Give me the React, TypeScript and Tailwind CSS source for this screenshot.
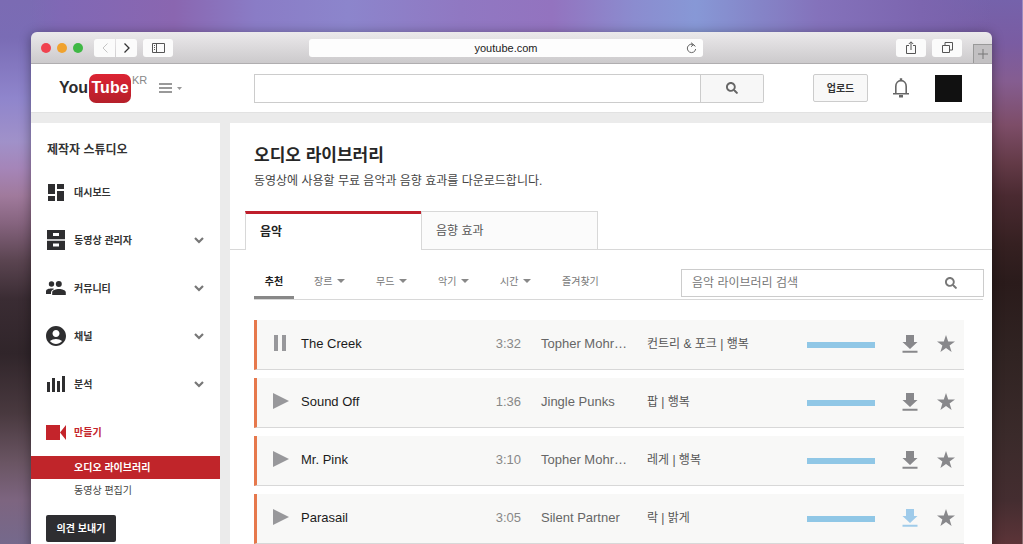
import React from "react";
import { FaSearch } from "react-icons/fa";
import { MdAccountCircle } from "react-icons/md";

const DashboardIcon = () => (
  <svg viewBox="0 0 16 17" className="h-[17px] w-4" fill="currentColor">
    <path d="M0 0h7v10H0zM9 0h7v5H9zM0 12h7v5H0zM9 7h7v10H9z" />
  </svg>
);

const DrawerIcon = () => (
  <svg viewBox="0 0 18 20" className="h-5 w-[18px]" fill="currentColor">
    <path
      fillRule="evenodd"
      d="M0 0h18v9.300H0zM6 3h6v3H6zM0 10.700h18V20H0zM6 13.500h6v3H6z"
    />
  </svg>
);

const PeopleIcon = () => (
  <svg viewBox="0 0 20 14" className="h-[14px] w-5" fill="currentColor">
    <circle cx="5.500" cy="3" r="2.700" />
    <circle cx="12.800" cy="3" r="3" />
    <path d="M0 13v-2.500C0 8.300 3 7.500 6 7.600c.8 0 1.500.1 2.100.3C6.300 8.700 5 9.800 5 11.500V13zM6.200 14v-2.500c0-2.200 3.800-3.400 6.800-3.400s6.800 1.200 6.800 3.400V14z" />
  </svg>
);

const BarsIcon = () => (
  <svg viewBox="0 0 18 16" className="h-4 w-[18px]" fill="currentColor">
    <path d="M0 6h3v10H0zM5 2h3v14H5zM10 5h3v11h-3zM15 0h3v16h-3z" />
  </svg>
);

const CameraIcon = () => (
  <svg viewBox="0 0 20 15" className="h-[15px] w-5" fill="currentColor">
    <path d="M0 0h14v15H0zM20 0v15l-6-7.500z" />
  </svg>
);

const BellIcon = () => (
  <svg viewBox="0 0 18 20" className="h-5 w-[18px]" fill="none" stroke="#666" strokeWidth="1.600">
    <path d="M1 15.800h16M3.800 15.500V8.500C3.800 5 6 2.600 9 2.600s5.200 2.400 5.200 5.900v7" />
    <path d="M9 .300v2M7 18.300h4" strokeWidth="2.400" />
  </svg>
);

const ChevronIcon = () => (
  <svg viewBox="0 0 10 7" className="h-[7px] w-[10px]" fill="none">
    <path d="M1 1l4 4 4-4" stroke="#777" strokeWidth="2.200" />
  </svg>
);

const DownloadIcon = () => (
  <svg viewBox="0 0 16 18" className="h-[18px] w-4" fill="currentColor">
    <path d="M4 0h8v7h3.500L8 14 .500 7H4zM.500 15.800h15v2H.500z" />
  </svg>
);

const StarIcon = () => (
  <svg viewBox="0 0 18 17" className="h-[17px] w-[18px]" fill="currentColor">
    <path d="M9 0l2.200 6.400H18l-5.400 4.100 2 6.500L9 13.100 3.400 17l2-6.500L0 6.400h6.800z" />
  </svg>
);

const Caret = () => (
  <svg viewBox="0 0 8 4" className="h-1 w-2" fill="#888">
    <path d="M0 0h8L4 4z" />
  </svg>
);

const menu_items = [
  { label: "대시보드", icon: <DashboardIcon />, hasArrow: false },
  { label: "동영상 관리자", icon: <DrawerIcon />, hasArrow: true },
  { label: "커뮤니티", icon: <PeopleIcon />, hasArrow: true },
  { label: "채널", icon: <MdAccountCircle size={24} />, hasArrow: true },
  { label: "분석", icon: <BarsIcon />, hasArrow: true },
];

const filters = ["장르", "무드", "악기", "시간"];

const tracks = [
  { title: "The Creek", time: "3:32", artist: "Topher Mohr…", genre: "컨트리 & 포크 | 행복", playing: true, saved: false },
  { title: "Sound Off", time: "1:36", artist: "Jingle Punks", genre: "팝 | 행복", playing: false, saved: false },
  { title: "Mr. Pink", time: "3:10", artist: "Topher Mohr…", genre: "레게 | 행복", playing: false, saved: false },
  { title: "Parasail", time: "3:05", artist: "Silent Partner", genre: "락 | 밝게", playing: false, saved: true },
];

const BrowserBar = () => (
  <div className="flex h-8 items-center rounded-t-md border-b border-[#b0aeb0] bg-linear-to-b from-[#ebe9eb] to-[#cccacc]">
    <div className="flex w-[278px] shrink-0 items-center pl-[10px]">
      <div className="flex gap-[6px]">
        <span className="size-[10px] rounded-full bg-[#f0424f]" />
        <span className="size-[10px] rounded-full bg-[#f0a22e]" />
        <span className="size-[10px] rounded-full bg-[#3fb845]" />
      </div>
      <div className="ml-[11px] flex gap-px">
        <button aria-label="뒤로" className="flex h-[18px] w-[21px] items-center justify-center rounded-l-[3px] bg-[#fbfbfb]">
          <svg viewBox="0 0 6 10" className="h-[10px] w-[6px]" fill="none" stroke="#c4c4c4">
            <path d="M5.500.500L1 5l4.500 4.500" />
          </svg>
        </button>
        <button aria-label="앞으로" className="flex h-[18px] w-[21px] items-center justify-center rounded-r-[3px] bg-[#fbfbfb]">
          <svg viewBox="0 0 6 10" className="h-[10px] w-[6px]" fill="none" stroke="#333" strokeWidth="1.300">
            <path d="M.500.500L5 5 .500 9.500" />
          </svg>
        </button>
      </div>
      <button aria-label="사이드바" className="ml-[6px] flex h-[18px] w-[30px] items-center justify-center rounded-[3px] bg-[#fbfbfb]">
        <svg viewBox="0 0 13 10" className="h-[10px] w-[13px]" fill="none" stroke="#555">
          <path d="M.500.500h12v9H.500zM4.500.500v9M2 2.500h1M2 4.500h1M2 6.500h1" />
        </svg>
      </button>
    </div>
    <div className="flex h-[18px] flex-1 items-center rounded-[3px] bg-[#fdfdfd] pr-[6px] pl-[17px] text-[11px] text-[#222]">
      <span className="flex-1 pt-px text-center">youtube.com</span>
      <button aria-label="새로고침">
        <svg viewBox="0 0 11 12" className="h-3 w-[11px]" fill="none" stroke="#666">
          <path d="M9.300 4.500A4.200 4.200 0 1 0 9.700 7M5 .700l2.500 2L5 4.700" />
        </svg>
      </button>
    </div>
    <div className="flex w-[289px] shrink-0 justify-end self-stretch">
      <div className="flex items-center gap-[6px] pr-[11px]">
        <button aria-label="공유" className="flex h-[18px] w-[30px] items-center justify-center rounded-[3px] bg-[#fbfbfb]">
          <svg viewBox="0 0 10 13" className="h-[13px] w-[10px]" fill="none" stroke="#555">
            <path d="M3 4.500H.500v8h9v-8H7M5 9V1M2.800 3L5 .800 7.200 3" />
          </svg>
        </button>
        <button aria-label="모든 탭" className="flex h-[18px] w-[30px] items-center justify-center rounded-[3px] bg-[#fbfbfb]">
          <svg viewBox="0 0 11 11" className="size-[11px]" fill="none" stroke="#555">
            <path d="M.500 3.500h7v7h-7zM3 3V.500h7.500V8H8" />
          </svg>
        </button>
      </div>
      <button aria-label="새 탭" className="mt-3 flex w-[19px] items-center justify-center border-t border-l border-[#999] bg-[#c2c0c2]">
        <svg viewBox="0 0 10 10" className="size-[10px]" stroke="#777">
          <path d="M5 0v10M0 5h10" />
        </svg>
      </button>
    </div>
  </div>
);

const SiteHeader = () => (
  <header className="flex h-[49px] items-center border-b border-[#e2e2e2] bg-white">
    <div className="flex w-[223px] shrink-0 items-center pl-7">
      <a href="#" className="flex items-center gap-px text-[16px] font-bold text-[#2b2b2e]">
        <span>You</span>
        <span className="flex h-[29px] w-[42px] items-center justify-center rounded-[7px] bg-linear-to-b from-[#dc2433] to-[#b51f2a] text-white">
          Tube
        </span>
      </a>
      <span className="ml-px self-start text-[11px] leading-3 text-[#888]">KR</span>
      <button aria-label="메뉴" className="ml-3 flex items-center gap-[5px]">
        <svg viewBox="0 0 13 10" className="h-[10px] w-[13px]" stroke="#999" strokeWidth="2">
          <path d="M0 1h13M0 5h13M0 9h13" />
        </svg>
        <svg viewBox="0 0 5 3" className="h-[3px] w-[5px]" fill="#999">
          <path d="M0 0h5L2.500 3z" />
        </svg>
      </button>
    </div>
    <form className="flex h-[29px] flex-1">
      <input aria-label="검색" className="min-w-0 flex-1 border border-[#ccc] px-2 text-[13px] outline-none" />
      <button
        type="button"
        aria-label="검색하기"
        className="flex w-[63px] items-center justify-center rounded-r-[2px] border border-l-0 border-[#ccc] bg-[#f7f7f7]"
      >
        <FaSearch size={12} color="#666" />
      </button>
    </form>
    <div className="flex w-[228px] shrink-0 items-center justify-end pr-[30px]">
      <button className="h-7 w-[55px] rounded-[2px] border border-[#ccc] bg-[#f8f8f8] text-[10px] font-bold text-[#333]">
        업로드
      </button>
      <button aria-label="알림" className="ml-6">
        <BellIcon />
      </button>
      <button aria-label="계정" className="ml-[25px] size-[27px] bg-[#111]" />
    </div>
  </header>
);

const Sidebar = () => (
  <aside className="w-[189px] shrink-0 bg-white text-[10px] text-[#333]">
    <h2 className="flex h-[45px] items-center pt-2 pl-4 text-[12px] font-bold">
      제작자 스튜디오
    </h2>
    <nav>
      {menu_items.map((item) => (
        <a key={item.label} href="#" className="flex h-12 items-center pr-4 pl-[13px] font-bold">
          <span className="flex w-6 justify-center text-[#2e2e30]">{item.icon}</span>
          <span className="ml-[6px] flex-1">{item.label}</span>
          {item.hasArrow && <ChevronIcon />}
        </a>
      ))}
      <a href="#" className="flex h-12 items-center pl-[15px] font-bold text-[#c4242b]">
        <CameraIcon />
        <span className="ml-2">만들기</span>
      </a>
      <a href="#" className="flex h-[23px] items-center bg-[#c0252a] pl-[43px] font-bold text-white">
        오디오 라이브러리
      </a>
      <a href="#" className="flex h-[22px] items-center pl-[43px] text-[#444]">
        동영상 편집기
      </a>
    </nav>
    <button className="mt-[14px] ml-[15px] h-[27px] w-[70px] rounded-[2px] bg-[#2e2e31] font-bold text-white">
      의견 보내기
    </button>
  </aside>
);

const TrackTable = () => (
  <table className="w-full table-fixed border-separate border-spacing-x-0 border-spacing-y-2 text-left text-[13px]">
    <colgroup>
      <col className="w-[47px]" />
      <col />
      <col className="w-[60px]" />
      <col className="w-[126px]" />
      <col className="w-[160px]" />
      <col className="w-[84px]" />
      <col className="w-[37px]" />
      <col className="w-[36px]" />
    </colgroup>
    <tbody>
      {tracks.map((track) => (
        <tr key={track.title} className="h-[50px] *:border-b *:border-b-[#d8d8d8] *:bg-[#f8f8f7] *:pb-[2px]">
          <td className="border-l-3 border-l-[#e6784c] pl-4">
            <button aria-label={track.playing ? "일시정지" : "재생"} className="mb-[2px] block">
              <svg viewBox="0 0 16 16" className="size-4" fill="#98989b">
                {track.playing ? <path d="M1 0h4v16H1zM9 0h4v16H9z" /> : <path d="M0 0l16 8-16 8z" />}
              </svg>
            </button>
          </td>
          <td className="text-[#1b1b1b]">{track.title}</td>
          <td className="text-right text-[#888]">{track.time}</td>
          <td className="pl-5 text-[#666]">{track.artist}</td>
          <td className="text-[12px] text-[#555]">{track.genre}</td>
          <td>
            <div className="mt-[2px] h-[6px] w-[68px] bg-[#90c7e6]" />
          </td>
          <td>
            <button aria-label="다운로드" className={`mx-auto block ${track.saved ? "text-[#9fcbea]" : "text-[#88888b]"}`}>
              <DownloadIcon />
            </button>
          </td>
          <td>
            <button aria-label="즐겨찾기" className="mx-auto block text-[#88888b]">
              <StarIcon />
            </button>
          </td>
        </tr>
      ))}
    </tbody>
  </table>
);

const AudioLibrary = () => (
  <main className="min-w-0 flex-1 bg-white">
    <div className="pt-[21px] pl-6">
      <h1 className="text-[17px] leading-6 font-bold text-[#262626]">오디오 라이브러리</h1>
      <p className="mt-[3px] text-[12px] leading-5 text-[#444]">
        동영상에 사용할 무료 음악과 음향 효과를 다운로드합니다.
      </p>
    </div>
    <div className="mt-5 flex border-b border-[#d8d8d8] pl-[15px] text-[12px]">
      <button className="-mb-px h-[39px] w-[176px] border-t-3 border-l border-t-[#bf1e2b] border-l-[#d8d8d8] bg-white pl-[14px] text-left font-bold text-[#222]">
        음악
      </button>
      <button className="h-[38px] w-[177px] border border-b-0 border-[#d8d8d8] bg-[#fbfbfb] pl-[14px] text-left text-[#555]">
        음향 효과
      </button>
    </div>
    <div className="mt-[19px] ml-6 mr-[9px] flex h-[31px] justify-between border-b border-[#d8d8d8]">
      <div className="flex text-[10px] text-[#777]">
        <button className="mr-5 w-10 border-b-3 border-[#888] pb-[3px] font-bold text-[#222]">추천</button>
        {filters.map((filter) => (
          <button key={filter} className="flex w-[62px] items-center gap-[5px] pb-[6px]">
            {filter}
            <Caret />
          </button>
        ))}
        <button className="pb-[6px]">즐겨찾기</button>
      </div>
      <label className="-mr-px flex h-7 w-[303px] items-center border border-[#ccc] bg-white pr-[26px] pl-[10px]">
        <input
          placeholder="음악 라이브러리 검색"
          aria-label="음악 라이브러리 검색"
          className="min-w-0 flex-1 text-[12px] outline-none placeholder:text-[#777]"
        />
        <FaSearch size={12} color="#777" />
      </label>
    </div>
    <div className="mt-3 mr-7 ml-6">
      <TrackTable />
    </div>
  </main>
);

// wallpaper: a coloured band along the top edge, then the left and right halves
const App = () => {
  return (
    <div className="h-screen overflow-hidden bg-[image:linear-gradient(to_right,transparent_3%,#8068b5_6%,#8a66b0_17%,#8a7cc6_25%,#8c85cc_34%,#9078c2_45%,#9373bf_54%,#8b8ccf_62%,#8798d6_68%,#8585c8_74%,#8472bb_80%,#7c65af_90%,transparent_97%),linear-gradient(to_bottom,#7b6bb3,#7a6cb5_7%,#8f85cc_18%,#a091c9_26%,#a585b8_31%,#a07a9c_36%,#86647f_41%,#5a4450_48%,#3a2c33_55%,#30252a_65%,#49393f_76%,#6a5563_85%,#7d6580_92%,#75698c),linear-gradient(to_bottom,#7562ab,#7a5ca2_8%,#855d90_15%,#7d4d68_23%,#633a47_30%,#4a2a31_36%,#352021_45%,#2a1b1b_52%,#302322_65%,#3a2a2a_80%,#442d30_92%,#5c3438)] bg-[size:100%_40px,50%_100%,51%_100%] bg-[position:left_top,left_top,right_top] bg-no-repeat px-[31px] pt-8 font-['Liberation_Sans','Noto_Sans_CJK_KR',sans-serif]">
      <div className="min-w-[900px] rounded-t-md shadow-[0_2px_12px_rgba(0,0,0,0.4)]">
        <BrowserBar />
        <SiteHeader />
        <div className="flex gap-[10px] bg-[#ebebeb] pt-[10px]">
          <Sidebar />
          <AudioLibrary />
        </div>
      </div>
    </div>
  );
};

export default App;
